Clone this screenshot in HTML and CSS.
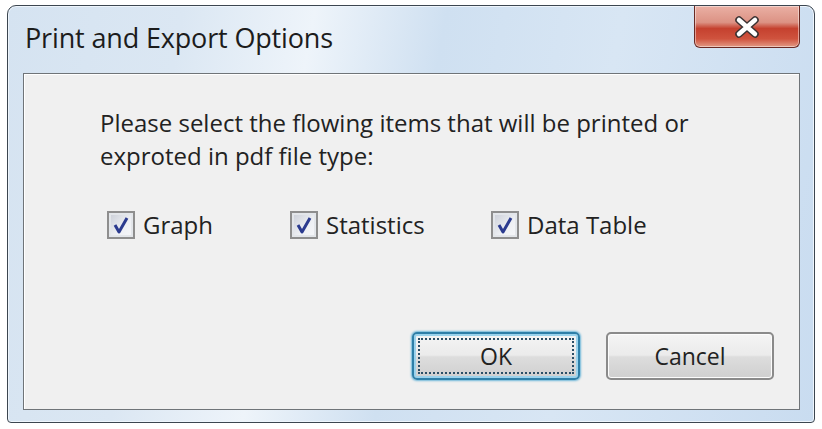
FILE: index.html
```html
<!DOCTYPE html>
<html>
<head>
<meta charset="utf-8">
<link rel="stylesheet" href="styles.css">
</head>
<body>
<div class="window">
  <div class="titlebar">
    <div class="title">Print and Export Options</div>
    <div class="close">
      <svg width="32" height="24" viewBox="0 0 32 24">
        <path d="M8 5 L24 19 M24 5 L8 19" stroke="#3a3232" stroke-width="7.5" stroke-linecap="round" fill="none"/>
        <path d="M8 5 L24 19 M24 5 L8 19" stroke="#ffffff" stroke-width="4.5" stroke-linecap="round" fill="none"/>
      </svg>
    </div>
  </div>
  <div class="client">
    <p class="prompt">Please select the flowing items that will be printed or<br>exproted in pdf file type:</p>
    <div class="checks">
      <label class="check c1"><span class="box"><svg width="20" height="20" viewBox="0 0 20 20"><path d="M4 10 L8 17 L16 3" stroke="#2b3b8f" stroke-width="3" fill="none" stroke-linejoin="round"/></svg></span>Graph</label>
      <label class="check c2"><span class="box"><svg width="20" height="20" viewBox="0 0 20 20"><path d="M4 10 L8 17 L16 3" stroke="#2b3b8f" stroke-width="3" fill="none" stroke-linejoin="round"/></svg></span>Statistics</label>
      <label class="check c3"><span class="box"><svg width="20" height="20" viewBox="0 0 20 20"><path d="M4 10 L8 17 L16 3" stroke="#2b3b8f" stroke-width="3" fill="none" stroke-linejoin="round"/></svg></span>Data Table</label>
    </div>
    <div class="buttons">
      <button class="btn ok"><span class="focus">OK</span></button>
      <button class="btn">Cancel</button>
    </div>
  </div>
</div>
</body>
</html>
```

FILE: styles.css
```css
html, body {
  margin: 0;
  padding: 0;
  background: #ffffff;
}
body {
  width: 822px;
  height: 429px;
  overflow: hidden;
  font-family: "Open Sans", "Liberation Sans", sans-serif;
}
.window {
  margin: 5px 0 0 7px;
  width: 806px;
  height: 416px;
  border: 1px solid #3c4650;
  border-radius: 9px 9px 4px 4px;
  background: linear-gradient(100deg, #d5e3f1 0%, #dbe7f3 20%, #eef4fa 35%, #cfe0f1 50%, #d8e6f4 70%, #c9dcf0 100%);
  display: flex;
  flex-direction: column;
  box-shadow: inset 0 0 0 1px #eef5fc;
}
.titlebar {
  height: 67px;
  display: flex;
  justify-content: space-between;
  align-items: flex-start;
}
.title {
  margin: 13px 0 0 17px;
  font-size: 27px;
  line-height: normal;
  color: #1c1c1c;
  letter-spacing: -0.15px;
}
.close {
  margin: 0 14px 0 0;
  width: 106px;
  height: 42px;
  box-sizing: border-box;
  border: 1px solid #6a2a24;
  border-top: none;
  border-radius: 0 0 6px 6px;
  background: linear-gradient(180deg, #eab0a4 0%, #dc9284 40%, #c5412f 55%, #cf533e 80%, #e39a85 100%);
  box-shadow: inset 0 0 0 1px rgba(255,255,255,0.45);
  display: flex;
  align-items: center;
  justify-content: center;
}
.client {
  margin: 0 14px 0 15px;
  height: 337px;
  box-sizing: border-box;
  background: #f0f0f0;
  border: 1px solid #6f7478;
  box-shadow: inset 1px 1px 0 #ffffff;
  display: flex;
  flex-direction: column;
}
.prompt {
  margin: 32px 0 0 76px;
  font-size: 24px;
  line-height: 33px;
  color: #222;
}
.checks {
  display: flex;
  margin: 36px 0 0 83px;
  font-size: 24px;
  color: #222;
}
.check {
  display: flex;
  align-items: center;
  gap: 8px;
}
.c1 { width: 183px; }
.c2 { width: 201px; }
.box {
  width: 28px;
  height: 28px;
  box-sizing: border-box;
  border: 2px solid #8e8e8e;
  background: linear-gradient(135deg, #c9cdd6 0%, #eef0f4 60%, #f6f7f9 100%);
  box-shadow: inset 0 0 0 2px #e3e6ea;
  display: flex;
  align-items: center;
  justify-content: center;
}
.buttons {
  display: flex;
  justify-content: flex-end;
  gap: 26px;
  margin: auto 25px 29px 0;
}
.btn {
  width: 168px;
  height: 48px;
  box-sizing: border-box;
  border: 2px solid #8a8a8a;
  border-radius: 5px;
  background: linear-gradient(180deg, #f4f4f4 0%, #ebebeb 48%, #dddddd 52%, #cfcfcf 100%);
  font-family: "Open Sans", "Liberation Sans", sans-serif;
  font-size: 23px;
  color: #222;
  padding: 0;
  box-shadow: inset 0 0 0 1px #fcfcfc;
}
.ok {
  border-color: #2e7fa8;
  box-shadow: 0 0 2px 1px #6fb7d9, inset 0 0 0 2px #9ad2ec;
  padding: 4px;
}
.focus {
  display: flex;
  align-items: center;
  justify-content: center;
  width: 100%;
  height: 100%;
  box-sizing: border-box;
  border: 2px dotted #2a4e66;
}
```
